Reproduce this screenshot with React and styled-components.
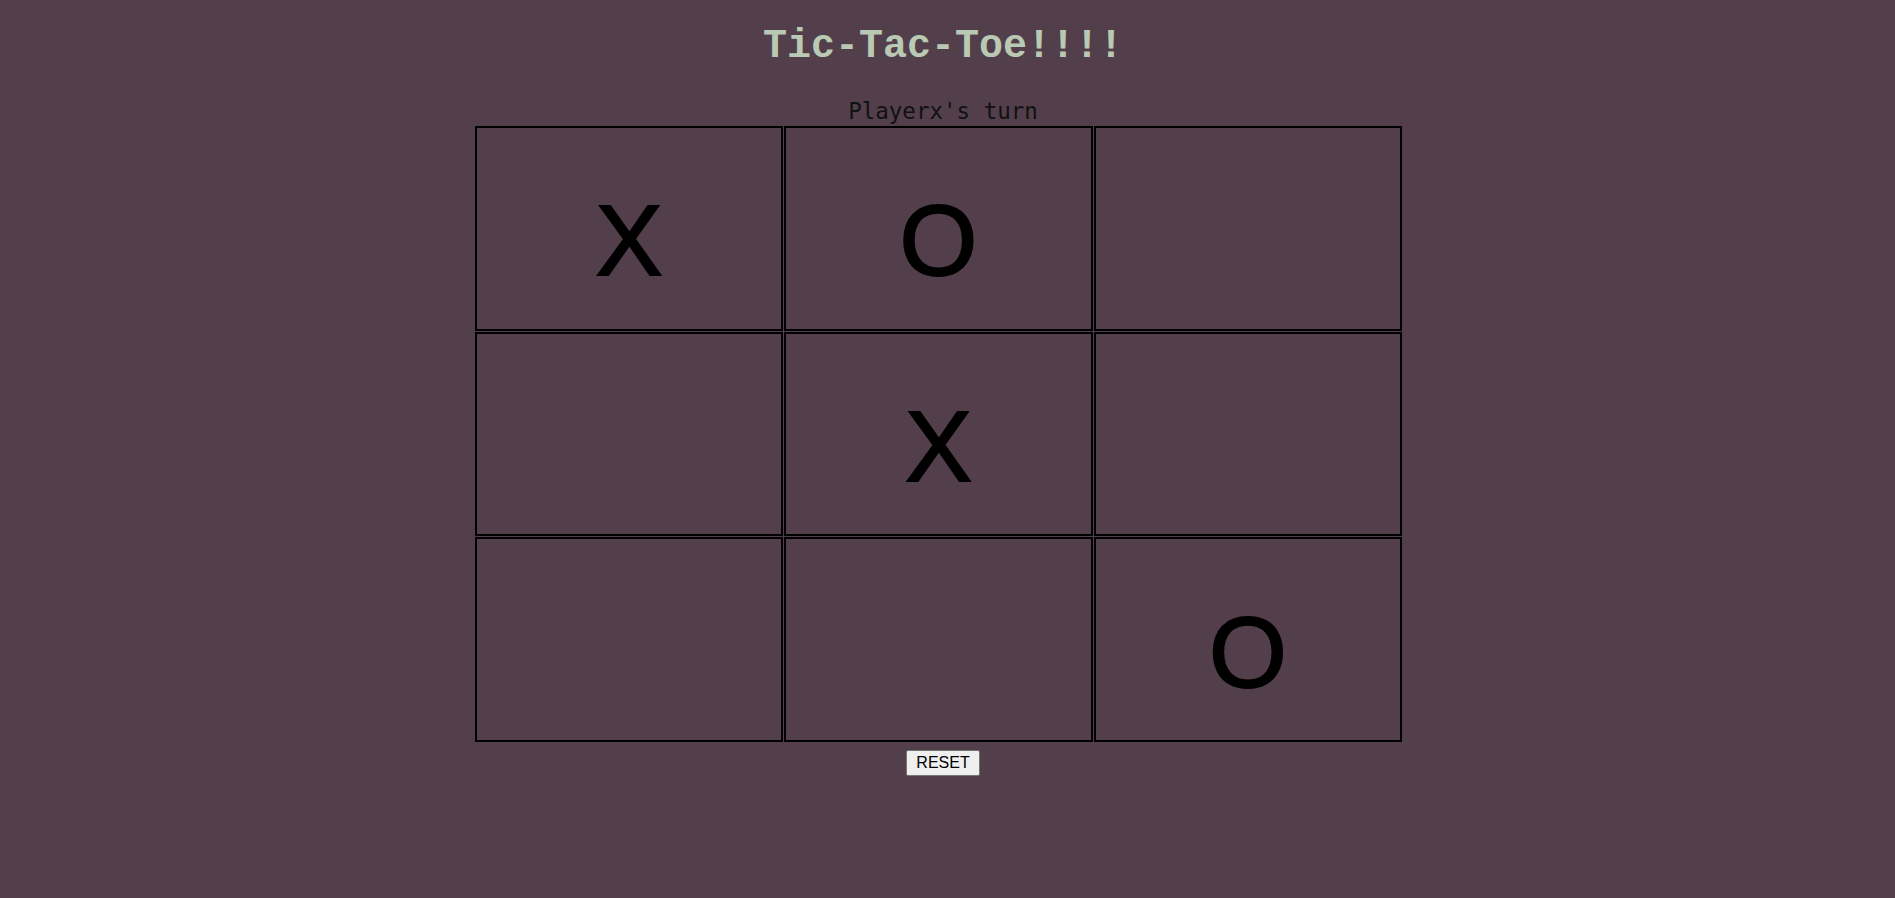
import { useState } from "react";
import styled, { createGlobalStyle } from "styled-components";

const GlobalStyle = createGlobalStyle`
  html, body {
    margin: 0;
    padding: 0;
    background: #523f4b;
  }
  body {
    font-family: "Liberation Sans", Arial, sans-serif;
  }
`;

const initialBoard = ["X", "O", "", "", "X", "", "", "", "O"];

const App = () => {
  const [board, setBoard] = useState(initialBoard);
  const [player, setPlayer] = useState("x");

  const handleClick = (i) => {
    if (board[i]) return;
    const next = [...board];
    next[i] = player.toUpperCase();
    setBoard(next);
    setPlayer(player === "x" ? "o" : "x");
  };

  return (
    <>
      <GlobalStyle />
      <Page>
        <Title>Tic-Tac-Toe!!!!</Title>
        <Turn>Player{player}'s turn</Turn>
        <Board>
          {board.map((val, i) => (
            <Cell key={i} onClick={() => handleClick(i)}>
              {val}
            </Cell>
          ))}
        </Board>
        <ResetBtn
          onClick={() => {
            setBoard(Array(9).fill(""));
            setPlayer("x");
          }}
        >
          RESET
        </ResetBtn>
      </Page>
    </>
  );
};

export default App;

const Page = styled.div`
  width: 1886px;
  min-height: 898px;
  box-sizing: border-box;
  padding-top: 24px;
  display: flex;
  flex-direction: column;
  align-items: center;
`;

const Title = styled.h1`
  margin: 0;
  font-family: "Liberation Mono", "Courier New", monospace;
  font-weight: bold;
  font-size: 40px;
  line-height: 46px;
  color: #b9c9b3;
`;

const Turn = styled.p`
  margin: 28px 0 1px;
  font-family: "DejaVu Sans Mono", monospace;
  font-size: 22.5px;
  line-height: 27px;
  color: #111;
`;

const Board = styled.div`
  width: 927px;
  height: 616px;
  margin-right: 9px;
  display: grid;
  grid-template-columns: repeat(3, 1fr);
  grid-template-rows: repeat(3, 1fr);
  gap: 1px;
`;

const Cell = styled.div`
  box-sizing: border-box;
  border: 2px solid #000;
  padding-top: 25px;
  display: flex;
  align-items: center;
  justify-content: center;
  font-family: "Liberation Sans", Arial, sans-serif;
  font-size: 100px;
  color: #000;
  -webkit-text-stroke: 2px #000;
  cursor: pointer;
`;

const ResetBtn = styled.button`
  margin-top: 8px;
  width: 74px;
  height: 26px;
  padding: 0;
  font-family: "Liberation Sans", Arial, sans-serif;
  font-size: 16px;
  color: #000;
  background: #efefef;
  border: 1px solid #767676;
  border-radius: 2px;
  cursor: pointer;
`;
